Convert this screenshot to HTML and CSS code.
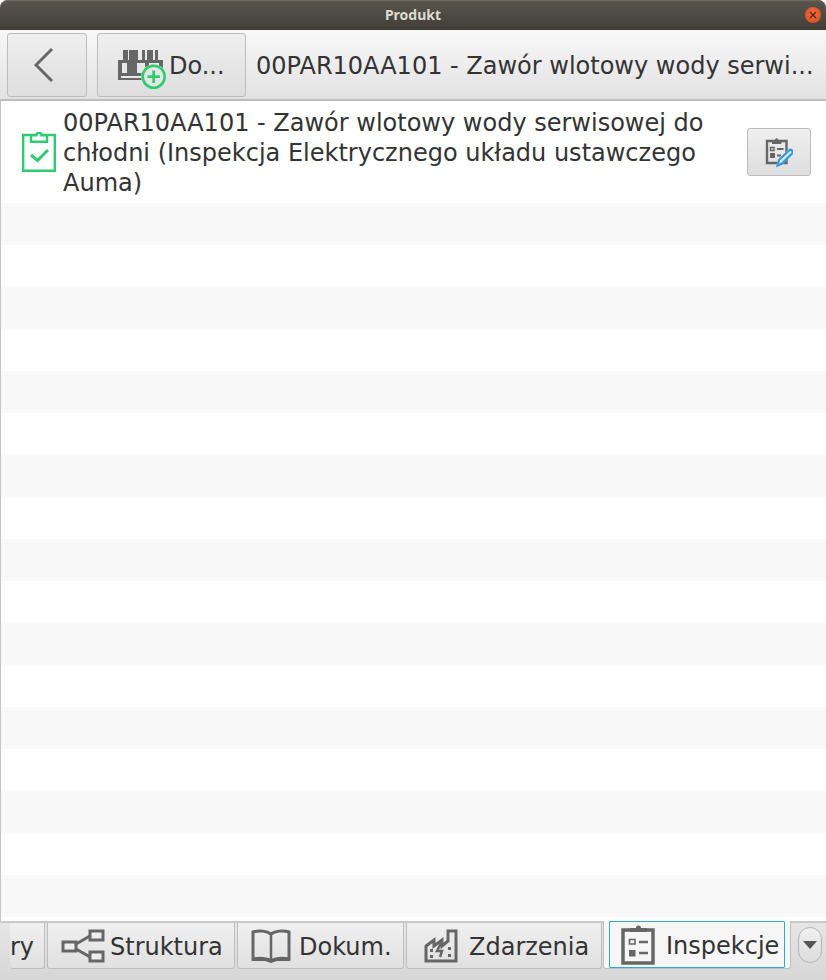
FILE: index.html
```html
<!DOCTYPE html>
<html lang="en">
<head>
  <meta charset="UTF-8" />
  <title>Produkt</title>
  <link rel="stylesheet" href="styles.css">
</head>
<body>
  <div class="window">
    <header class="titlebar">
      <span class="title">Produkt</span>
      <span class="close">
        <svg width="8" height="8" viewBox="0 0 8 8"><path d="M1 1l6 6M7 1l-6 6" stroke="#4a2a1a" stroke-width="1.3" fill="none"/></svg>
      </span>
    </header>

    <div class="toolbar">
      <button class="btn btn-back">
        <svg width="26" height="36" viewBox="0 0 26 36"><path d="M18 2L2 18l16 16" stroke="#666" stroke-width="3" fill="none"/></svg>
      </button>
      <button class="btn btn-add">
        <svg width="48" height="42" viewBox="0 0 48 42">
          <path d="M5 1h5v10H5zM11 1h9v10h-9zM24 1h3v10h-3zM29 1h6v10h-6zM37 1h3v10h-3z" fill="#666"/>
          <path d="M0 11h45v20H0z" fill="#666"/>
          <path d="M4 14h5v10H4zM19 14h8v10h-8zM31 14h10v8H31zM3 27h38v2H3z" fill="#e8e8e8"/>
          <circle cx="35.7" cy="27.7" r="12.5" fill="#e6e6e6"/>
          <circle cx="35.7" cy="27.7" r="11" fill="none" stroke="#2ecc71" stroke-width="2.6"/>
          <path d="M29.5 27.7h12.4M35.7 21.5v12.4" stroke="#2ecc71" stroke-width="2.8" fill="none"/>
        </svg>
        <span>Do...</span>
      </button>
      <div class="heading">00PAR10AA101 - Zawór wlotowy wody serwi...</div>
    </div>

    <main class="list">
      <div class="row-first">
        <svg class="row-icon" width="34" height="40" viewBox="0 0 34 40">
          <path d="M1.2 3h31.6v35.8H1.2z" fill="none" stroke="#2ecc71" stroke-width="2.4"/>
          <path d="M9 3.2h5.5a2.5 2.5 0 0 1 5 0H25v6.6H9z" fill="#fff" stroke="#2ecc71" stroke-width="2.4"/>
          <path d="M9 23l6.5 5.5L26 18" fill="none" stroke="#2ecc71" stroke-width="3"/>
        </svg>
        <div class="row-text">00PAR10AA101 - Zawór wlotowy wody serwisowej do chłodni (Inspekcja Elektrycznego układu ustawczego Auma)</div>
        <button class="btn btn-edit">
          <svg width="28" height="30" viewBox="0 0 28 30">
            <path d="M2 4h19.5v22H2z" fill="none" stroke="#666" stroke-width="2.4"/>
            <path d="M7 7V3h3a1.7 1.7 0 0 1 3.4 0h3v4z" fill="#666"/>
            <path d="M5.5 10.5h3.5v3H5.5z" fill="none" stroke="#666" stroke-width="1.4"/>
            <path d="M5 16h5v5H5z" fill="#666"/>
            <path d="M12 12h6.5M12 18.5h4" stroke="#666" stroke-width="2"/>
            <path d="M11 30l2-8L24 12l4 4L17 28z" fill="#e6e6e6"/>
            <path d="M12.5 28.5l1.500-5.500L24 13.500c1-1 2-1 3 0s1 2 0 3L17 26.500z" fill="#dcecf7" stroke="#3498db" stroke-width="2.2"/>
          </svg>
        </button>
      </div>
      <div class="stripe"></div><div class="stripe"></div><div class="stripe"></div>
      <div class="stripe"></div><div class="stripe"></div><div class="stripe"></div>
      <div class="stripe"></div><div class="stripe"></div><div class="stripe"></div>
      <div class="stripe"></div><div class="stripe"></div><div class="stripe"></div>
      <div class="stripe"></div><div class="stripe"></div><div class="stripe"></div>
      <div class="stripe"></div><div class="stripe"></div><div class="stripe"></div>
    </main>

    <nav class="tabs">
      <div class="tab tab-cut"><span>ry</span></div>
      <div class="tab tab-struktura">
        <svg width="44" height="34" viewBox="0 0 44 34">
          <path d="M2 13h13v9H2zM29 2h13v9H29zM29 23h13v9H29z" fill="#eee" stroke="#666" stroke-width="3"/>
          <path d="M15 15L29 7M15 20l14 8" stroke="#666" stroke-width="3" fill="none"/>
        </svg>
        <span>Struktura</span>
      </div>
      <div class="tab tab-dokum">
        <svg width="40" height="34" viewBox="0 0 40 34">
          <path d="M20 5C16 2 8 1 2 3v27c6-1 13-1 18 2 5-3 12-3 18-2V3C32 1 24 2 20 5z" fill="none" stroke="#666" stroke-width="3"/>
          <path d="M20 5v26" stroke="#666" stroke-width="2.500"/>
          <path d="M1 29h13l6 3 6-3h13v3H26l-6 2-6-2H1z" fill="#666"/>
        </svg>
        <span>Dokum.</span>
      </div>
      <div class="tab tab-zdarzenia">
        <svg width="34" height="34" viewBox="0 0 34 34">
          <path d="M2 32V17l8-6v6l8-6v6l6-5V2h8v30z" fill="none" stroke="#666" stroke-width="3"/>
          <path d="M17 14l-4 8h5l-2 6" fill="none" stroke="#666" stroke-width="2.500"/>
          <path d="M6 20h3v3H6zM6 26h3v3H6zM24 18h3v3h-3zM24 25h3v3h-3z" fill="#666"/>
        </svg>
        <span>Zdarzenia</span>
      </div>
      <div class="tab tab-active">
        <div class="tab-focus">
          <svg width="34" height="42" viewBox="0 0 34 42">
            <path d="M2 6h30v33H2z" fill="none" stroke="#666" stroke-width="3.500"/>
            <path d="M9 8V4h6a2.500 2.500 0 0 1 5 0h6v4z" fill="#666"/>
            <path d="M8.500 15.500h5.500v4.500H8.500z" fill="none" stroke="#666" stroke-width="1.600"/>
            <path d="M8 26h6.500v6.500H8z" fill="#666"/>
            <path d="M18 18h9M18 29h9" stroke="#666" stroke-width="2.500"/>
          </svg>
          <span>Inspekcje</span>
        </div>
      </div>
      <div class="tab-menu"><i></i></div>
    </nav>
  </div>
</body>
</html>
```

FILE: styles.css
```css
html, body {
  margin: 0;
  padding: 0;
}

.window {
  width: 826px;
  height: 980px;
  display: flex;
  flex-direction: column;
  overflow: hidden;
  font-family: "DejaVu Sans", sans-serif;
  font-size: 24px;
  color: #333;
}

.titlebar {
  height: 30px;
  flex: none;
  position: relative;
  display: flex;
  align-items: center;
  justify-content: center;
  background: linear-gradient(#5a564e, #403e38);
  border-radius: 8px 8px 0 0;
  box-shadow: inset 0 1px 0 #6e6a62;
}

.title {
  font-family: "Noto Sans", sans-serif;
  font-size: 14px;
  font-weight: 700;
  color: #dfdbd2;
  margin-bottom: 2px;
}

.close {
  position: absolute;
  right: 5px;
  top: 7px;
  width: 16px;
  height: 16px;
  border-radius: 50%;
  background: radial-gradient(circle at 50% 40%, #f0703f, #d9471c);
  display: flex;
  align-items: center;
  justify-content: center;
}

.toolbar {
  height: 71px;
  flex: none;
  box-sizing: border-box;
  padding: 3px 7px 2px;
  display: flex;
  align-items: stretch;
  background: linear-gradient(#f8f8f8, #e2e2e2);
  border-bottom: 2px solid #bdbdbd;
}

.btn {
  box-sizing: border-box;
  border: 1px solid #bcbcbc;
  border-radius: 3px;
  background: linear-gradient(#efefef, #dedede);
  padding: 0;
  margin: 0;
  display: flex;
  align-items: center;
  justify-content: center;
  font: inherit;
  color: inherit;
}

.btn-back {
  width: 80px;
}

.btn-add {
  width: 149px;
  margin-left: 10px;
  justify-content: flex-start;
  padding-left: 20px;
  gap: 3px;
}

.btn-add svg {
  margin-top: 10px;
}

.btn-add span {
  margin-top: 2px;
}

.heading {
  margin-left: 10px;
  line-height: 66px;
  white-space: nowrap;
}

.list {
  flex: 1;
  min-height: 0;
  overflow: hidden;
  background: #fff;
  border-left: 1px solid #c4c4c4;
}

.row-first {
  height: 102px;
  display: flex;
  align-items: center;
  box-sizing: border-box;
  padding-left: 21px;
  padding-right: 15px;
}

.row-icon {
  flex: none;
}

.row-text {
  width: 660px;
  margin-left: 7px;
  line-height: 30px;
  margin-top: 1px;
}

.btn-edit {
  width: 64px;
  height: 48px;
  flex: none;
  margin-left: auto;
}

.stripe {
  height: 42px;
}

.stripe:nth-child(even) {
  background: #f8f8f8;
}

.tabs {
  height: 59px;
  flex: none;
  box-sizing: border-box;
  display: flex;
  align-items: flex-start;
  padding-left: 10px;
  background: linear-gradient(#e6e6e6, #d6d6d6);
  border-top: 2px solid #c9c9c9;
}

.tab {
  box-sizing: border-box;
  height: 46px;
  display: flex;
  align-items: center;
  gap: 5px;
  background: linear-gradient(#f0f0f0, #e0e0e0);
  border: 1px solid #bdbdbd;
  border-top: none;
  border-radius: 0 0 3px 3px;
  margin-right: 2px;
  padding-left: 13px;
  white-space: nowrap;
  overflow: hidden;
}

.tab span {
  margin-top: 2px;
}

.tab-cut {
  width: 35px;
  padding-left: 0;
  justify-content: flex-end;
  padding-right: 10px;
  border-left: none;
}

.tab-struktura {
  width: 188px;
}

.tab-dokum {
  width: 167px;
  gap: 8px;
}

.tab-zdarzenia {
  width: 196px;
  padding-left: 17px;
  gap: 11px;
  margin-right: 1px;
}

.tab-active {
  width: 188px;
  height: 48px;
  margin: -2px 0 0;
  padding: 0 5px;
  background: #f6f6f6;
  align-items: stretch;
}

.tab-focus {
  flex: 1;
  box-sizing: border-box;
  display: flex;
  align-items: center;
  gap: 11px;
  padding-left: 11px;
  border: 1px solid #2fa8d8;
  border-radius: 1px;
}

.tab-menu {
  width: 24px;
  height: 36px;
  margin: 4px 0 0 7px;
  box-sizing: border-box;
  border: 1px solid #b4b4b4;
  border-radius: 12px;
  background: linear-gradient(#f0f0f0, #dcdcdc);
  display: flex;
  align-items: center;
  justify-content: center;
}

.tab-menu i {
  width: 0;
  height: 0;
  border-left: 7px solid transparent;
  border-right: 7px solid transparent;
  border-top: 8px solid #555;
}
```
